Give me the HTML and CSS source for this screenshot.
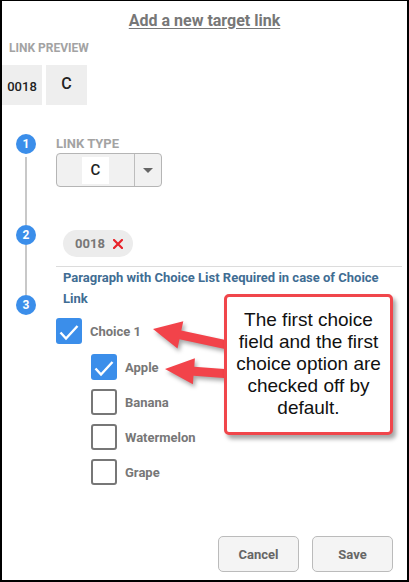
FILE: index.html
```html
<!DOCTYPE html>
<html>
<head>
<meta charset="utf-8">
<link rel="stylesheet" href="styles.css">
</head>
<body>
<div class="frame">
  <h1 class="title">Add a new target link</h1>
  <div class="label preview-label">LINK PREVIEW</div>
  <div class="preview">
    <div class="pbox num">0018</div>
    <div class="pbox letter">C</div>
  </div>

  <div class="steps">
    <div class="rail">
      <div class="dot">1</div>
      <div class="line line1"></div>
      <div class="dot">2</div>
      <div class="line line2"></div>
      <div class="dot">3</div>
    </div>
    <div class="content">
      <div class="label type-label">LINK TYPE</div>
      <div class="select">
        <div class="select-val"><span class="val-box">C</span></div>
        <div class="select-btn"><span class="caret"></span></div>
      </div>
      <div class="chip">
        <span>0018</span>
        <svg class="x" width="10" height="10" viewBox="0 0 10 10"><path d="M1 1L9 9M9 1L1 9" stroke="#e8222a" stroke-width="2.2" stroke-linecap="square"/></svg>
      </div>
      <div class="rule"></div>
      <p class="para">Paragraph with Choice List Required in case of Choice Link</p>
      <div class="checks">
        <div class="crow">
          <span class="cb on"><svg width="26" height="26" viewBox="0 0 26 26"><path d="M4.5 14.5L10 20.5L21.5 8" fill="none" stroke="#fff" stroke-width="2.4"/></svg></span>
          <span class="clabel">Choice 1</span>
        </div>
        <div class="options">
          <div class="crow">
            <span class="cb on"><svg width="26" height="26" viewBox="0 0 26 26"><path d="M4.5 14.5L10 20.5L21.5 8" fill="none" stroke="#fff" stroke-width="2.4"/></svg></span>
            <span class="clabel">Apple</span>
          </div>
          <div class="crow"><span class="cb"></span><span class="clabel">Banana</span></div>
          <div class="crow"><span class="cb"></span><span class="clabel">Watermelon</span></div>
          <div class="crow"><span class="cb"></span><span class="clabel">Grape</span></div>
        </div>
      </div>
    </div>
  </div>

  <div class="actions">
    <button class="btn">Cancel</button>
    <button class="btn">Save</button>
  </div>

  <svg class="arrows" width="409" height="582" viewBox="0 0 409 582">
    <polygon points="153,329 183.3,321.2 181.3,330.5 230.2,340.9 228.4,349.7 179.5,339.3 177.5,348.6" fill="#f2434a"/>
    <polygon points="165,369 194.9,358.3 194.3,366.8 231.2,369.6 230.4,378.6 193.5,375.8 192.9,384.3" fill="#f2434a"/>
  </svg>
  <div class="callout">The first choice field and the first choice option are checked off by default.</div>
</div>
</body>
</html>
```
FILE: styles.css
```css
* { box-sizing: border-box; }
html, body { margin: 0; padding: 0; background: #fff; }
body { font-family: Roboto, "Noto Sans", sans-serif; }

.frame {
  position: relative;
  width: 409px;
  height: 582px;
  border-style: solid;
  border-color: #000;
  border-width: 1px 2px 2px 2px;
  display: flex;
  flex-direction: column;
  overflow: hidden;
}

.title {
  margin: 11px 0 0;
  font-size: 16px;
  line-height: 18px;
  font-weight: 700;
  color: #777;
  text-align: center;
  text-decoration: underline;
  text-underline-offset: 2px;
}

.label {
  font-size: 12px;
  line-height: 14px;
  font-weight: 700;
  color: #a3a3a3;
}
.preview-label { margin: 11px 0 0 7px; }

.preview {
  display: flex;
  gap: 4px;
  margin-top: 10px;
}
.pbox {
  width: 40px;
  height: 40px;
  background: #eee;
  display: flex;
  align-items: center;
  justify-content: center;
  color: #222;
  font-weight: 500;
}
.pbox.num { font-size: 13px; padding-top: 3px; }
.pbox.letter { width: 41px; font-size: 16px; padding-bottom: 3px; }

.steps {
  display: flex;
  margin-top: 29px;
  padding-left: 14px;
  padding-right: 5px;
}
.rail {
  width: 20px;
  flex: none;
  display: flex;
  flex-direction: column;
  align-items: center;
}
.dot {
  width: 20px;
  height: 20px;
  border-radius: 50%;
  background: #3b8eea;
  color: #fff;
  font-size: 12px;
  font-weight: 700;
  display: flex;
  align-items: center;
  justify-content: center;
}
.line { width: 2px; background: #c8c8c8; }
.line1 { height: 68px; margin-top: 3px; }
.line2 { height: 50px; }

.content {
  flex: 1;
  margin-left: 20px;
}
.type-label { margin-top: 3px; font-size: 13px; }

.select {
  margin-top: 2px;
  width: 106px;
  height: 34px;
  border: 1px solid #b5b5b5;
  border-radius: 4px;
  background: #f1f1f1;
  display: flex;
}
.select-val {
  width: 78px;
  display: flex;
  align-items: center;
  justify-content: center;
  border-right: 1px solid #bdbdbd;
}
.val-box {
  width: 27px;
  height: 27px;
  background: #fff;
  display: flex;
  align-items: center;
  justify-content: center;
  font-size: 15px;
  font-weight: 500;
  color: #222;
}
.select-btn {
  flex: 1;
  display: flex;
  align-items: center;
  justify-content: center;
}
.caret {
  width: 0;
  height: 0;
  border-left: 5px solid transparent;
  border-right: 5px solid transparent;
  border-top: 5px solid #666;
}

.chip {
  margin: 43px 0 0 7px;
  width: 70px;
  height: 27px;
  border-radius: 14px;
  background: #ececec;
  display: flex;
  align-items: center;
  padding-left: 12px;
  font-size: 13px;
  font-weight: 700;
  color: #777;
}
.chip .x { margin-left: 8px; }

.rule {
  margin-top: 9px;
  height: 1px;
  background: #dcdcdc;
}

.para {
  margin: 0;
  padding-left: 7px;
  font-size: 13px;
  line-height: 21px;
  font-weight: 700;
  color: #3f6d93;
}

.checks { margin-top: 9px; }
.crow {
  display: flex;
  align-items: center;
  height: 26px;
}
.options {
  margin-left: 35px;
  margin-top: 10px;
  display: flex;
  flex-direction: column;
  gap: 9px;
}
.cb {
  width: 26px;
  height: 26px;
  border: 2px solid #777;
  border-radius: 3px;
  background: #fff;
  flex: none;
}
.cb.on {
  border: none;
  background: #3b8eea;
}
.cb svg { display: block; }
.clabel {
  margin-left: 8px;
  font-size: 13px;
  font-weight: 700;
  color: #777;
}

.actions {
  margin-top: auto;
  margin-bottom: 8px;
  display: flex;
  justify-content: flex-end;
  gap: 13px;
  padding-right: 14px;
}
.btn {
  width: 81px;
  height: 36px;
  border: 1px solid #bbb;
  border-radius: 5px;
  background: #f4f4f4;
  font-family: Roboto, sans-serif;
  font-size: 13px;
  font-weight: 700;
  color: #666;
}

.arrows {
  position: absolute;
  left: -2px;
  top: -1px;
  filter: drop-shadow(2px 3px 2px rgba(0,0,0,0.35));
  pointer-events: none;
}

.callout {
  position: absolute;
  left: 222px;
  top: 293px;
  width: 169px;
  height: 141px;
  border: 3px solid #f0464b;
  border-radius: 5px;
  background: #fff;
  box-shadow: 3px 4px 4px rgba(0,0,0,0.35);
  padding: 12px 4px 0;
  font-family: "Liberation Sans", Arial, sans-serif;
  font-size: 19px;
  line-height: 22px;
  color: #111;
  text-align: center;
}
```
